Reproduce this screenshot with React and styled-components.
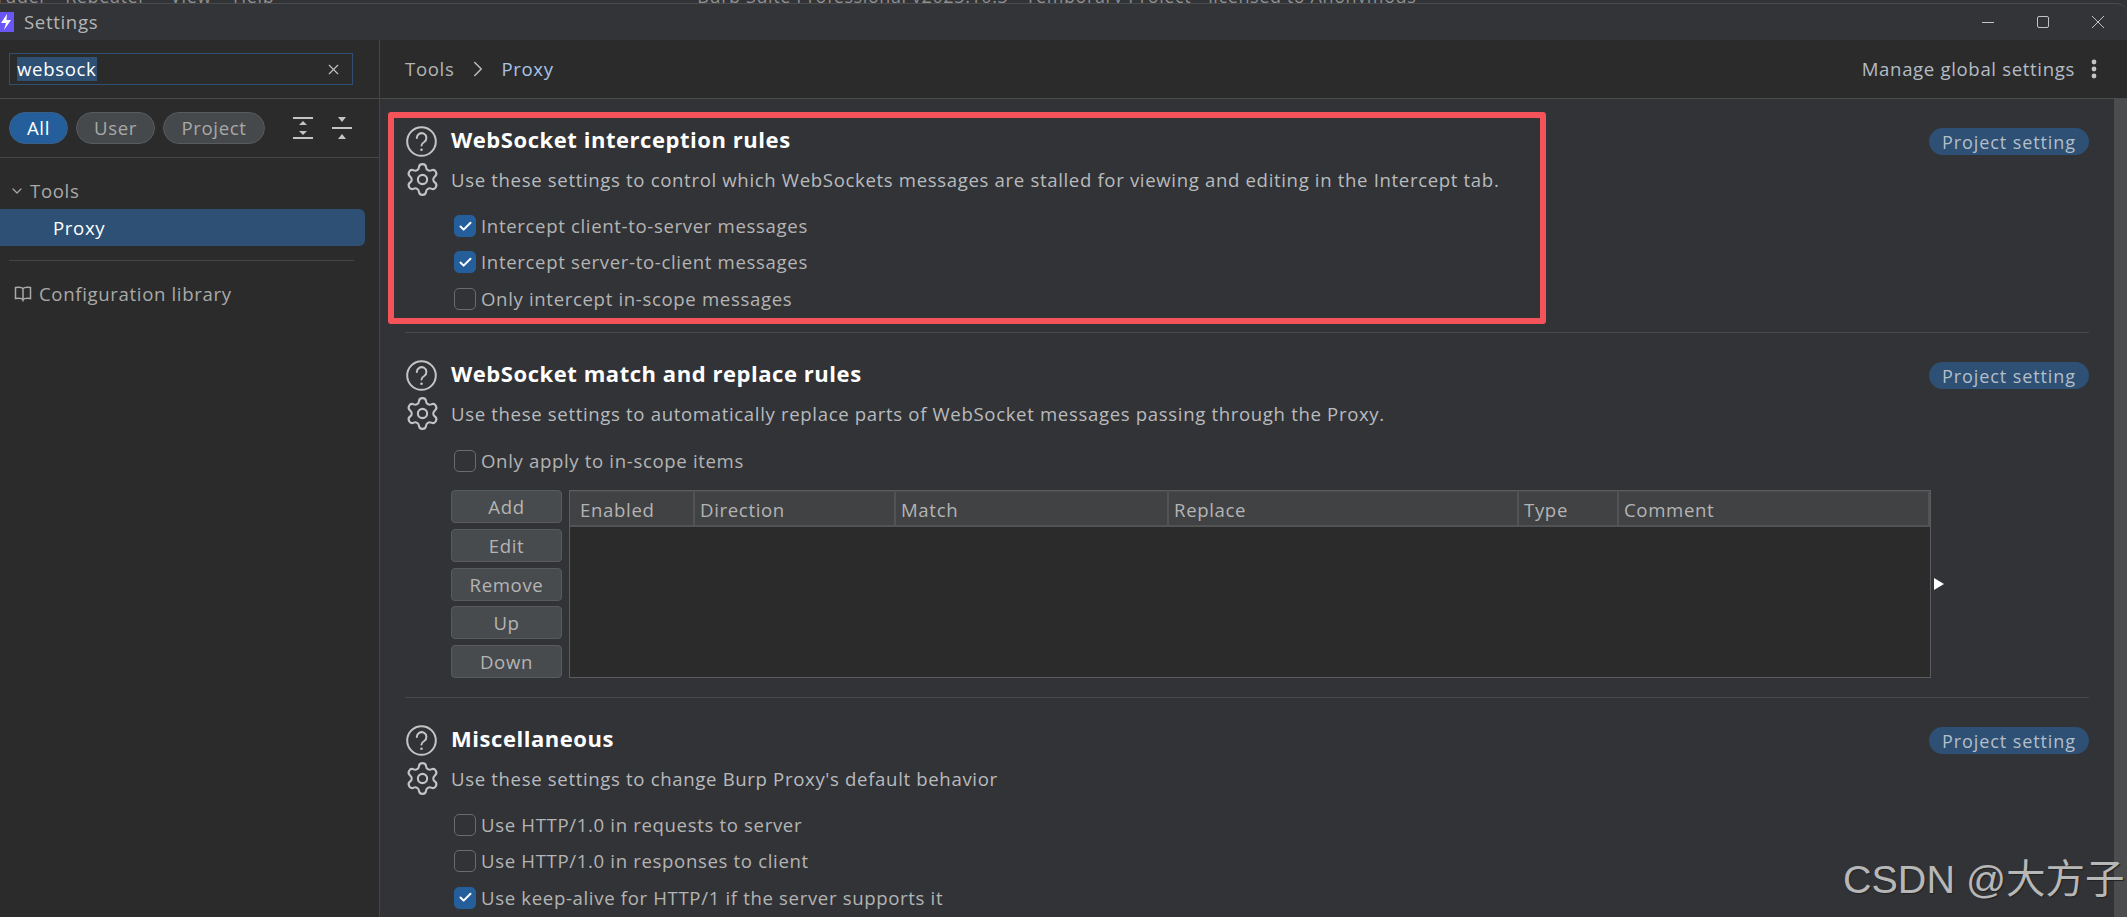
import React from 'react'
import styled, { createGlobalStyle } from 'styled-components'
import { Check, ChevronDown, ChevronRight, Settings, X } from 'lucide-react'

const FONT = '"Open Sans", "Noto Sans", sans-serif'

const GlobalStyle = createGlobalStyle`
  html, body {
    margin: 0;
    padding: 0;
    background: #323336;
    overflow: hidden;
  }
  * { box-sizing: border-box; }
`

const Page = styled.div`
  position: relative;
  width: 2127px;
  height: 917px;
  display: flex;
  flex-direction: column;
  overflow: hidden;
  background: #323336;
  font-family: ${FONT};
  font-size: 18.6px;
  line-height: 24px;
  letter-spacing: 0.65px;
  color: #bbbbbb;
`

const BehindStrip = styled.div`
  height: 3px;
  overflow: hidden;
  background: #323336;
  display: flex;
  color: #8f8f8f;
  font-size: 18px;
  line-height: 20px;
  letter-spacing: 0.6px;
`

const BehindInner = styled.div`
  margin-top: -14px;
  display: flex;
  width: 100%;
  white-space: nowrap;
`

const BehindMenu = styled.span`
  margin-left: ${p => p.$left}px;
`

const TitleBar = styled.div`
  height: 37px;
  flex: none;
  display: flex;
  align-items: center;
  background: #333437;
  border-top: 1px solid #4a4b4d;
  border-top-right-radius: 10px;
`

const Logo = styled.svg`
  width: 14px;
  height: 20px;
  flex: none;
  margin-right: 10px;
`

const WindowTitle = styled.span`
  flex: 1;
  color: #b4b4b4;
`

const WindowButtons = styled.div`
  display: flex;
  gap: 43px;
  margin-right: 23px;
`

const WindowIcon = styled.svg`
  width: 12px;
  height: 12px;
  display: block;
`

const Body = styled.div`
  flex: 1;
  display: flex;
  min-height: 0;
`

const Sidebar = styled.aside`
  width: 380px;
  flex: none;
  background: #2b2b2b;
  border-right: 1px solid #444547;
`

const SearchArea = styled.div`
  height: 59px;
  padding: 13px 26px 0 9px;
  border-bottom: 1px solid #4b4b4b;
`

const SearchBox = styled.div`
  height: 32px;
  display: flex;
  align-items: center;
  justify-content: space-between;
  padding: 0 10px 0 7px;
  border: 1.5px solid #2d5074;
  color: #ffffff;
`

const Selected = styled.span`
  background: #2d5074;
  line-height: 24px;
`

const FilterBar = styled.div`
  height: 59px;
  display: flex;
  align-items: center;
  padding-left: 9px;
  border-bottom: 1px solid #454545;
`

const FilterPill = styled.div`
  height: 32px;
  display: flex;
  align-items: center;
  justify-content: center;
  width: ${p => p.$width}px;
  margin-right: 8px;
  border-radius: 16px;
  background: ${p => (p.$active ? '#245f9c' : '#46494b')};
  border: 1px solid ${p => (p.$active ? '#3a5f86' : '#585a5b')};
  color: ${p => (p.$active ? '#ffffff' : '#a8a8a8')};
`

const ToolIcon = styled.svg`
  width: 20px;
  height: 24px;
  flex: none;
  margin-left: ${p => p.$left}px;
`

const Tree = styled.div`
  padding-top: 15px;
`

const TreeGroup = styled.div`
  height: 36px;
  display: flex;
  align-items: center;
  padding-left: 9px;
  gap: 5px;
  color: #a9a9a9;
`

const TreeItem = styled.div`
  width: 365px;
  height: 37px;
  display: flex;
  align-items: center;
  padding-left: 53px;
  background: #2d5074;
  border-radius: 0 6px 6px 0;
  color: #ffffff;
`

const TreeDivider = styled.div`
  height: 1px;
  margin: 14px 25px 0 9px;
  background: #454545;
`

const LibraryRow = styled.div`
  height: 32px;
  margin-top: 17px;
  display: flex;
  align-items: center;
  padding-left: 14px;
  gap: 7px;
  color: #a9a9a9;
`

const Main = styled.main`
  flex: 1;
  min-width: 0;
  display: flex;
  flex-direction: column;
`

const MainHeader = styled.header`
  height: 59px;
  flex: none;
  display: flex;
  align-items: center;
  padding: 0 30px 0 25px;
  background: #2b2b2b;
  border-bottom: 1px solid #4b4b4b;
`

const Crumb = styled.span`
  color: ${p => (p.$current ? '#a6c4e6' : '#b4b4b4')};
`

const CrumbIcon = styled(ChevronRight)`
  margin: 0 10px 0 11px;
`

const ManageLink = styled.span`
  margin-left: auto;
  color: #b4bcc4;
`

const Dots = styled.svg`
  width: 6px;
  height: 20px;
  margin-left: 16px;
`

const Content = styled.div`
  flex: 1;
  min-height: 0;
  display: flex;
`

const Panel = styled.div`
  flex: 1;
  min-width: 0;
  padding: 0 25px 0 25px;
`

const ScrollTrack = styled.div`
  width: 13px;
  flex: none;
  background: #4c4d4f;
`

const Section = styled.section`
  position: relative;
  padding: 27px 0 ${p => p.$bottom}px;
  border-bottom: ${p => (p.$last ? 'none' : '1px solid #48494b')};
`

const RedBox = styled.div`
  position: absolute;
  left: -17px;
  top: 13px;
  width: 1158px;
  height: 212px;
  border: 6px solid #f5535a;
  border-radius: 3px;
  pointer-events: none;
`

const TitleRow = styled.div`
  height: 31px;
  display: flex;
  align-items: center;
`

const IconCell = styled.div`
  width: 46px;
  flex: none;
  display: flex;
  padding-left: 1px;
  color: #c4c4c4;
`

const GearIcon = styled(Settings)`
  margin: -3px 0 0 -2px;
`

const Title = styled.h2`
  margin: 0;
  padding-bottom: 5px;
  font-size: 22px;
  line-height: 30px;
  font-weight: 700;
  letter-spacing: 0.55px;
  color: #ffffff;
`

const ScopeBadge = styled.span`
  margin-left: auto;
  height: 27px;
  width: 160px;
  display: flex;
  align-items: center;
  justify-content: center;
  border-radius: 14px;
  background: #2d5074;
  color: #b4bec9;
  font-size: 18px;
  letter-spacing: 0.9px;
`

const DescRow = styled.div`
  height: 31px;
  margin-top: 8px;
  display: flex;
  align-items: center;
  color: #b8bbbe;
`

const DescText = styled.span`
  padding-bottom: 1px;
`

const CheckList = styled.div`
  margin-top: 12px;
  padding-left: 49px;
`

const CheckRow = styled.label`
  height: 36px;
  display: flex;
  align-items: center;
  gap: 5px;
  color: #b4b4b4;

  &:last-child {
    height: 37px;
  }
`

const CheckBox = styled.span`
  width: 22px;
  height: 22px;
  flex: none;
  display: flex;
  align-items: center;
  justify-content: center;
  border-radius: 5px;
  background: ${p => (p.$checked ? '#245f9c' : 'transparent')};
  border: 1.5px solid ${p => (p.$checked ? '#245f9c' : '#6a6b6d')};
  color: #ffffff;
`

const RulesArea = styled.div`
  margin: 11px 0 0 46px;
  display: flex;
  gap: 7px;
`

const ButtonColumn = styled.div`
  width: 111px;
  flex: none;
  display: flex;
  flex-direction: column;
  justify-content: space-between;
`

const RuleButton = styled.button`
  height: 33px;
  padding: 0;
  border: 1px solid #585a5c;
  border-radius: 4px;
  background: #484b4e;
  color: #b4b4b4;
  font-family: inherit;
  font-size: inherit;
  letter-spacing: inherit;
`

const Table = styled.div`
  width: 1362px;
  height: 188px;
  background: #2b2b2b;
  border: 1px solid #5b5c5e;
`

const TableHead = styled.div`
  height: 36px;
  display: grid;
  grid-template-columns: 125px 201px 273px 350px 100px 1fr;
  background: #414244;
  border-bottom: 2px solid #525355;
  border-top: 1px solid #4a4b4d;
`

const HeadCell = styled.div`
  display: flex;
  align-items: center;
  padding: 2px 0 0 5px;
  color: #b4b4b4;
  border-right: 2px solid #525355;

  &:first-child {
    padding-left: 10px;
  }
`

const ExpandArrow = styled.div`
  align-self: center;
  width: 0;
  height: 0;
  margin-left: -4px;
  border-left: 10px solid #ffffff;
  border-top: 6px solid transparent;
  border-bottom: 6px solid transparent;
`

const Watermark = styled.div`
  position: absolute;
  left: 1843px;
  top: 854px;
  font-family: "Liberation Sans", "Noto Sans CJK SC", sans-serif;
  font-size: 39.5px;
  line-height: 50px;
  letter-spacing: 0;
  color: #b7b7b7;
  white-space: nowrap;
  text-shadow: 1px 1px 1px #222222;
`

const columns = ['Enabled', 'Direction', 'Match', 'Replace', 'Type', 'Comment']
const ruleButtons = ['Add', 'Edit', 'Remove', 'Up', 'Down']

const Option = ({ checked, children }) => (
  <CheckRow>
    <CheckBox $checked={checked}>{checked && <Check size={15} strokeWidth={3.2} />}</CheckBox>
    {children}
  </CheckRow>
)

const HelpIcon = () => (
  <svg width="31" height="31" viewBox="0 0 31 31" fill="none" stroke="currentColor" strokeWidth="2" strokeLinecap="round">
    <circle cx="15.5" cy="15.5" r="14.3" />
    <path d="M10.8 12a4.8 4.8 0 1 1 7.4 4c-1.8 1.1-2.7 2-2.7 3.6" />
    <circle cx="15.5" cy="23.8" r="1.3" fill="currentColor" stroke="none" />
  </svg>
)

const SectionHead = ({ title, desc }) => (
  <>
    <TitleRow>
      <IconCell><HelpIcon /></IconCell>
      <Title>{title}</Title>
      <ScopeBadge>Project setting</ScopeBadge>
    </TitleRow>
    <DescRow>
      <IconCell><GearIcon size={37} strokeWidth={1.35} /></IconCell>
      <DescText>{desc}</DescText>
    </DescRow>
  </>
)

const BookIcon = () => (
  <svg width="18" height="18" viewBox="0 0 18 18" fill="none" stroke="#a9a9a9" strokeWidth="1.5">
    <path d="M9 3.5C7.5 2 4 2 1.5 2.5v11C4 13 7.5 13 9 14.5c1.5-1.5 5-1.5 7.5-1V2.5C14 2 10.5 2 9 3.5zM9 3.5v13" />
  </svg>
)

export default function App() {
  return (
    <Page>
      <GlobalStyle />
      <BehindStrip>
        <BehindInner>
          <BehindMenu $left={-27}>Intruder</BehindMenu>
          <BehindMenu $left={18}>Repeater</BehindMenu>
          <BehindMenu $left={24}>View</BehindMenu>
          <BehindMenu $left={21}>Help</BehindMenu>
          <BehindMenu $left={423}>Burp Suite Professional v2023.10.3 - Temporary Project - licensed to Anonymous</BehindMenu>
        </BehindInner>
      </BehindStrip>
      <TitleBar>
        <Logo viewBox="0 0 14 20">
          <rect width="14" height="20" fill="#6a55f5" />
          <path d="M7 2 L1 11 H6 L4 18 L11 8 H6.5 Z" fill="#ffffff" />
        </Logo>
        <WindowTitle>Settings</WindowTitle>
        <WindowButtons>
          <WindowIcon viewBox="0 0 12 12" stroke="#c4c4c4" fill="none"><path d="M0 6.5h12" /></WindowIcon>
          <WindowIcon viewBox="0 0 12 12" stroke="#c4c4c4" fill="none"><rect x=".5" y=".5" width="11" height="11" rx="1.5" /></WindowIcon>
          <WindowIcon viewBox="0 0 12 12" stroke="#c4c4c4" fill="none"><path d="M0 0l12 12M12 0L0 12" /></WindowIcon>
        </WindowButtons>
      </TitleBar>
      <Body>
        <Sidebar>
          <SearchArea>
            <SearchBox>
              <Selected>websock</Selected>
              <X size={17} color="#c4c4c4" strokeWidth={1.6} />
            </SearchBox>
          </SearchArea>
          <FilterBar>
            <FilterPill $active $width={59}>All</FilterPill>
            <FilterPill $width={79}>User</FilterPill>
            <FilterPill $width={102}>Project</FilterPill>
            <ToolIcon $left={20} viewBox="0 0 20 24" fill="#c4c4c4">
              <path d="M0 1h20v2H0zM0 21h20v2H0zM10 5l4 4H6zM10 19l-4-4h8z" />
            </ToolIcon>
            <ToolIcon $left={19} viewBox="0 0 20 24" fill="#c4c4c4">
              <path d="M0 11h20v2H0zM6 1h8l-4 5zM10 18l4 5H6z" />
            </ToolIcon>
          </FilterBar>
          <Tree>
            <TreeGroup><ChevronDown size={16} strokeWidth={1.8} />Tools</TreeGroup>
            <TreeItem>Proxy</TreeItem>
            <TreeDivider />
            <LibraryRow><BookIcon />Configuration library</LibraryRow>
          </Tree>
        </Sidebar>
        <Main>
          <MainHeader>
            <Crumb>Tools</Crumb>
            <CrumbIcon size={26} strokeWidth={1.4} />
            <Crumb $current>Proxy</Crumb>
            <ManageLink>Manage global settings</ManageLink>
            <Dots viewBox="0 0 6 20" fill="#c4c4c4">
              <circle cx="3" cy="3" r="2.4" /><circle cx="3" cy="10" r="2.4" /><circle cx="3" cy="17" r="2.4" />
            </Dots>
          </MainHeader>
          <Content>
            <Panel>
              <Section $bottom={15}>
                <RedBox />
                <SectionHead
                  title="WebSocket interception rules"
                  desc="Use these settings to control which WebSockets messages are stalled for viewing and editing in the Intercept tab."
                />
                <CheckList>
                  <Option checked>Intercept client-to-server messages</Option>
                  <Option checked>Intercept server-to-client messages</Option>
                  <Option>Only intercept in-scope messages</Option>
                </CheckList>
              </Section>
              <Section $bottom={19}>
                <SectionHead
                  title="WebSocket match and replace rules"
                  desc="Use these settings to automatically replace parts of WebSocket messages passing through the Proxy."
                />
                <CheckList>
                  <Option>Only apply to in-scope items</Option>
                </CheckList>
                <RulesArea>
                  <ButtonColumn>
                    {ruleButtons.map(label => <RuleButton key={label}>{label}</RuleButton>)}
                  </ButtonColumn>
                  <Table>
                    <TableHead>
                      {columns.map(col => <HeadCell key={col}>{col}</HeadCell>)}
                    </TableHead>
                  </Table>
                  <ExpandArrow />
                </RulesArea>
              </Section>
              <Section $last $bottom={0}>
                <SectionHead
                  title="Miscellaneous"
                  desc="Use these settings to change Burp Proxy's default behavior"
                />
                <CheckList>
                  <Option>Use HTTP/1.0 in requests to server</Option>
                  <Option>Use HTTP/1.0 in responses to client</Option>
                  <Option checked>Use keep-alive for HTTP/1 if the server supports it</Option>
                </CheckList>
              </Section>
            </Panel>
            <ScrollTrack />
          </Content>
        </Main>
      </Body>
      <Watermark>CSDN @大方子</Watermark>
    </Page>
  )
}
